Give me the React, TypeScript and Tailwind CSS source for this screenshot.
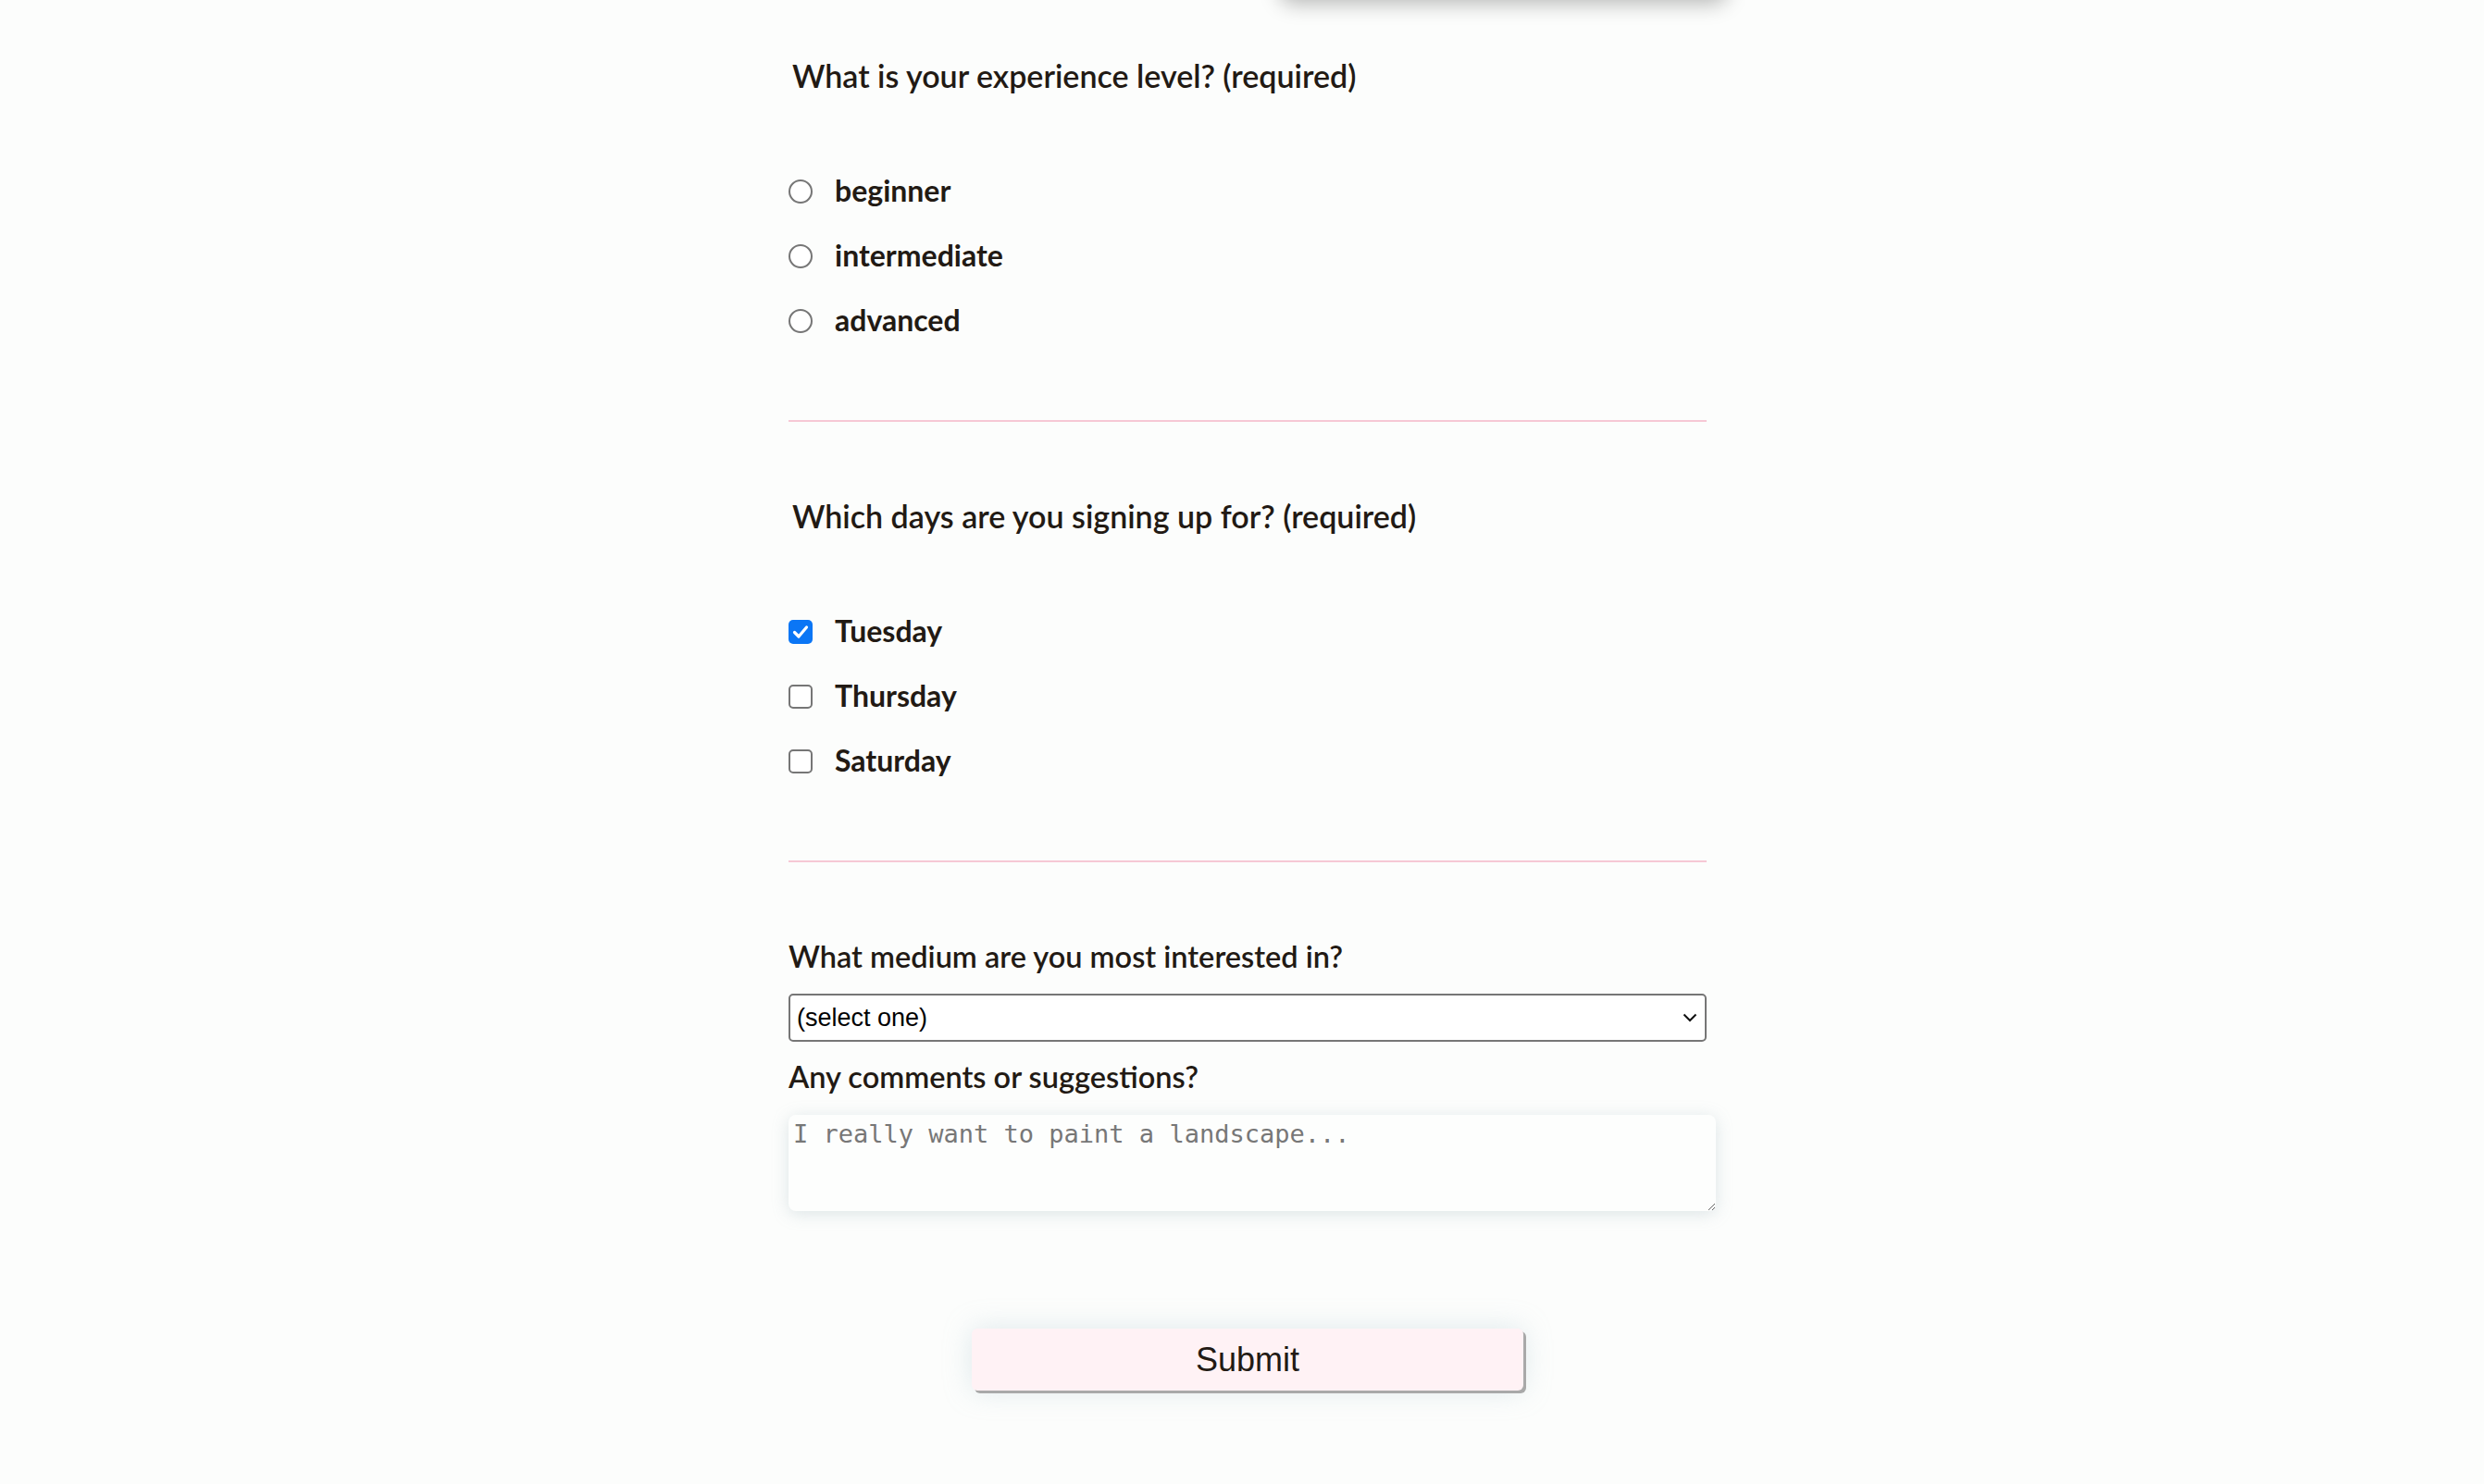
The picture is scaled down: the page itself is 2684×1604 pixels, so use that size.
import React from 'react';

const headingFont = { fontFamily: 'Lato, "Noto Sans", sans-serif' };

const levels = ['beginner', 'intermediate', 'advanced'];
const days = [
  { label: 'Tuesday', checked: true },
  { label: 'Thursday', checked: false },
  { label: 'Saturday', checked: false },
];

const App: React.FC = () => {
  return (
    <div className="min-h-screen w-full overflow-hidden bg-[#fcfdfc] text-[#221a14]">
      {/* card scrolled above the fold */}
      <div className="flex pl-[1383px]">
        <div className="-mt-[44px] h-[44px] w-[483px] rounded-[14px] bg-white shadow-[0_4px_22px_rgba(0,0,0,0.28)]" />
      </div>

      <div className="flex justify-center pl-[12px]">
        <form className="flex w-[992px] flex-col" style={headingFont}>
          {/* Experience level */}
          <h2 className="mt-[62px] h-[40px] pl-[4px] text-[34px] font-semibold leading-[40px]">
            What is your experience level? (required)
          </h2>
          <div className="mt-[70px] flex flex-col">
            {levels.map((level) => (
              <label key={level} className="flex h-[70px] items-center gap-[24px]">
                <input
                  type="radio"
                  name="level"
                  className="m-0 h-[26px] w-[26px] appearance-none rounded-full border-2 border-[#767676] bg-white"
                />
                <span className="-mt-[2px] text-[32px] font-bold leading-[40px]">{level}</span>
              </label>
            ))}
          </div>
          <div className="mt-[72px] h-[2px] bg-[#f6c8d5]" />

          {/* Days */}
          <h2 className="mt-[82px] h-[40px] pl-[4px] text-[34px] font-semibold leading-[40px]">
            Which days are you signing up for? (required)
          </h2>
          <div className="mt-[70px] flex flex-col">
            {days.map((day) => (
              <label key={day.label} className="flex h-[70px] items-center gap-[24px]">
                <span className="relative flex h-[26px] w-[26px]">
                  <input
                    type="checkbox"
                    defaultChecked={day.checked}
                    className={
                      day.checked
                        ? 'm-0 h-[26px] w-[26px] appearance-none rounded-[5px] bg-[#0b76f5]'
                        : 'm-0 h-[26px] w-[26px] appearance-none rounded-[5px] border-2 border-[#767676] bg-white'
                    }
                  />
                  {day.checked && (
                    <svg
                      viewBox="0 0 26 26"
                      className="pointer-events-none absolute inset-0 h-[26px] w-[26px]"
                    >
                      <path
                        d="M6.5 13.5l4.5 4.5 8.5-10"
                        fill="none"
                        stroke="white"
                        strokeWidth="3.2"
                        strokeLinecap="round"
                        strokeLinejoin="round"
                      />
                    </svg>
                  )}
                </span>
                <span className="-mt-[2px] text-[32px] font-bold leading-[40px]">{day.label}</span>
              </label>
            ))}
          </div>
          <div className="mt-[72px] h-[2px] bg-[#f6c8d5]" />

          {/* Medium */}
          <label className="mt-[82px] h-[40px] text-[32.5px] font-semibold leading-[40px]">
            What medium are you most interested in?
          </label>
          <div className="relative mt-[20px] h-[52px]">
            <select
              defaultValue=""
              className="h-[52px] w-full appearance-none rounded-[5px] border-2 border-[#767676] bg-white pl-[7px] text-[27px] text-black outline-none"
              style={{ fontFamily: '"Liberation Sans", Arial, sans-serif' }}
            >
              <option value="">(select one)</option>
              <option value="oil">oil</option>
              <option value="watercolor">watercolor</option>
              <option value="acrylic">acrylic</option>
            </select>
            <svg
              viewBox="0 0 16 10"
              className="pointer-events-none absolute right-[10px] top-[21px] h-[10px] w-[16px]"
            >
              <path d="M1.5 1.5l6.5 6.5 6.5-6.5" fill="none" stroke="#111" strokeWidth="2" />
            </svg>
          </div>

          {/* Comments */}
          <label className="mt-[18px] h-[40px] text-[32.5px] font-semibold leading-[40px]">
            Any comments or suggestions?
          </label>
          <textarea
            placeholder="I really want to paint a landscape..."
            className="mt-[21px] h-[104px] w-[1002px] rounded-[8px] bg-[#fdfefd] px-[5px] pt-[4px] text-[27px] leading-[34px] text-[#333] shadow-[0_3px_18px_rgba(140,165,175,0.28)] outline-none placeholder:text-[#777]"
            style={{ fontFamily: '"DejaVu Sans Mono", monospace' }}
          />

          <button
            type="submit"
            className="mx-auto mt-[127px] h-[67px] w-[596px] rounded-[6px] bg-[#fff2f5] text-[36px] text-[#221a14] shadow-[3px_3px_0_#a9a9a9,0_0_30px_rgba(170,195,205,0.35)]"
            style={{ fontFamily: '"Liberation Sans", Arial, sans-serif' }}
          >
            Submit
          </button>
        </form>
      </div>
    </div>
  );
};

export default App;
